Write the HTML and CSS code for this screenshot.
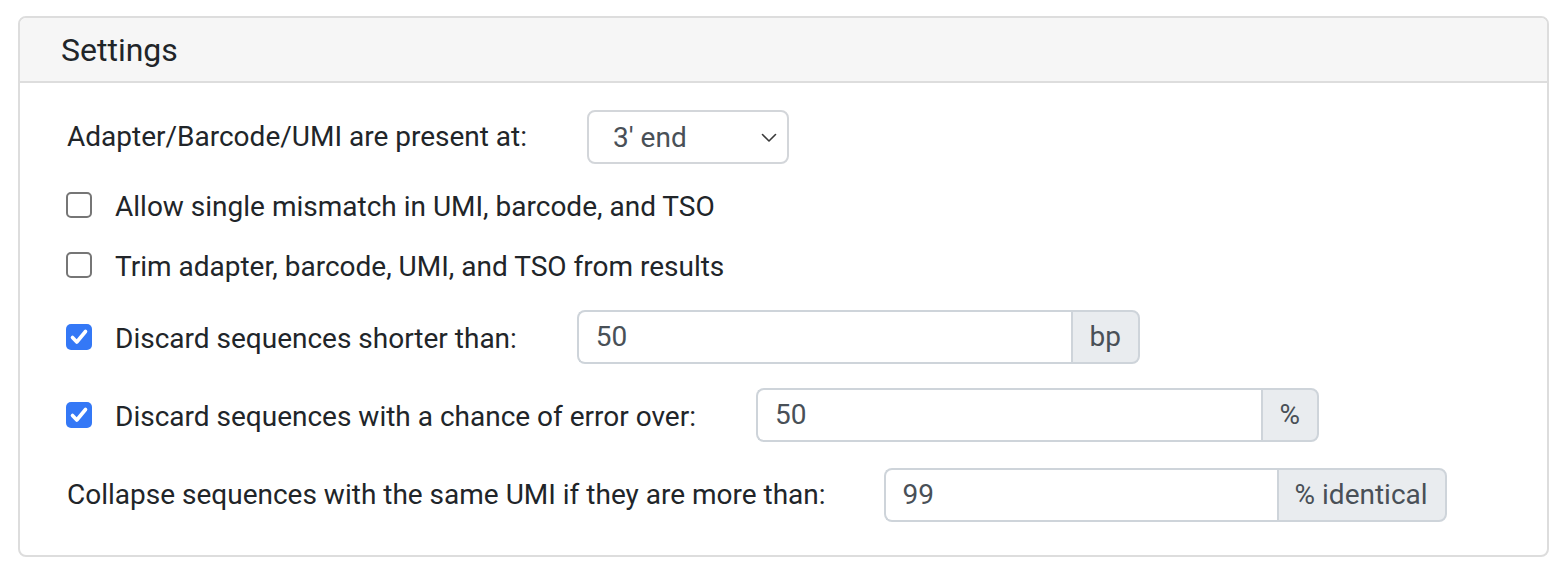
FILE: index.html
```html
<!DOCTYPE html>
<html>
<head>
<meta charset="utf-8">
<link rel="stylesheet" href="styles.css">
</head>
<body>
<div class="page">
  <div class="card">
    <div class="card-header">Settings</div>
    <div class="card-body">
      <div class="row row-select">
        <span class="lbl">Adapter/Barcode/UMI are present at:</span>
        <div class="select">
          <span>3' end</span>
          <svg class="chev" width="16" height="10" viewBox="0 0 16 10"><path d="M1.5 1.5 L8 8 L14.5 1.5" fill="none" stroke="#3a3a3a" stroke-width="1.6" stroke-linecap="round" stroke-linejoin="round"/></svg>
        </div>
      </div>
      <div class="row row-check first-check">
        <span class="cb"></span>
        <span class="cb-lbl">Allow single mismatch in UMI, barcode, and TSO</span>
      </div>
      <div class="row row-check">
        <span class="cb"></span>
        <span class="cb-lbl">Trim adapter, barcode, UMI, and TSO from results</span>
      </div>
      <div class="row row-input">
        <span class="cb checked"><svg width="26" height="26" viewBox="0 0 26 26"><path d="M6.5 13.5 L10.8 18 L19.5 7.5" fill="none" stroke="#fff" stroke-width="3.6" stroke-linecap="round" stroke-linejoin="round"/></svg></span>
        <span class="cb-lbl lbl">Discard sequences shorter than:</span>
        <div class="igroup">
          <div class="ival">50</div>
          <div class="addon">bp</div>
        </div>
      </div>
      <div class="row row-input">
        <span class="cb checked"><svg width="26" height="26" viewBox="0 0 26 26"><path d="M6.5 13.5 L10.8 18 L19.5 7.5" fill="none" stroke="#fff" stroke-width="3.6" stroke-linecap="round" stroke-linejoin="round"/></svg></span>
        <span class="cb-lbl lbl">Discard sequences with a chance of error over:</span>
        <div class="igroup">
          <div class="ival">50</div>
          <div class="addon">%</div>
        </div>
      </div>
      <div class="row row-input last">
        <span class="lbl lbl-tight">Collapse sequences with the same UMI if they are more than:</span>
        <div class="igroup">
          <div class="ival">99</div>
          <div class="addon">% identical</div>
        </div>
      </div>
    </div>
  </div>
</div>
</body>
</html>
```

FILE: styles.css
```css
html, body {
  margin: 0;
  padding: 0;
  background: #ffffff;
}

body {
  font-family: Roboto, "Liberation Sans", Arial, sans-serif;
  color: #212529;
  font-size: 28px;
}

.page {
  padding: 16px 19px 0 18px;
}

.card {
  border: 2px solid #dddddd;
  border-radius: 8px;
  background: #ffffff;
  width: 1527px;
  height: 537px;
}

.card-header {
  background: #f6f6f6;
  border-bottom: 2px solid #dddddd;
  border-radius: 6px 6px 0 0;
  font-size: 32px;
  line-height: 38px;
  padding: 13px 40px 12px 41px;
}

.card-body {
  padding: 27px 46px 0 46px;
  display: flex;
  flex-direction: column;
}

.row {
  display: flex;
  align-items: center;
}

.row-select {
  height: 54px;
  padding-left: 1px;
}

.row-check {
  height: 40px;
  margin-top: 20px;
}

.row-check.first-check {
  margin-top: 21px;
}

.row-input {
  height: 53px;
  margin-top: 25px;
}

.row-input.last {
  margin-top: 27px;
  padding-left: 1px;
}

.lbl {
  margin-right: 60px;
  line-height: 34px;
}

.lbl-tight {
  margin-right: 58px;
}

.cb-lbl {
  line-height: 34px;
  margin-top: 4px;
}

.cb {
  box-sizing: border-box;
  width: 26px;
  height: 26px;
  border: 2px solid #767676;
  border-radius: 5px;
  margin-right: 23px;
  flex: none;
  display: flex;
  align-items: center;
  justify-content: center;
  background: #ffffff;
}

.cb.checked {
  border: none;
  background: #3478f6;
}

.cb svg {
  display: block;
}

.select {
  box-sizing: border-box;
  width: 202px;
  height: 54px;
  border: 2px solid #d3d6da;
  border-radius: 8px;
  display: flex;
  align-items: center;
  justify-content: space-between;
  padding: 0 10px 0 24px;
  color: #495057;
}

.chev {
  display: block;
  margin-top: 2px;
}

.igroup {
  display: flex;
  width: 563px;
  height: 54px;
  box-sizing: border-box;
  color: #495057;
}

.ival {
  flex: 1;
  box-sizing: border-box;
  border: 2px solid #ced4da;
  border-right: none;
  border-radius: 8px 0 0 8px;
  display: flex;
  align-items: center;
  padding-left: 17px;
  background: #ffffff;
}

.addon {
  box-sizing: border-box;
  border: 2px solid #ced4da;
  border-radius: 0 8px 8px 0;
  background: #e9ecef;
  display: flex;
  align-items: center;
  padding: 0 17px 0 16px;
}
```
